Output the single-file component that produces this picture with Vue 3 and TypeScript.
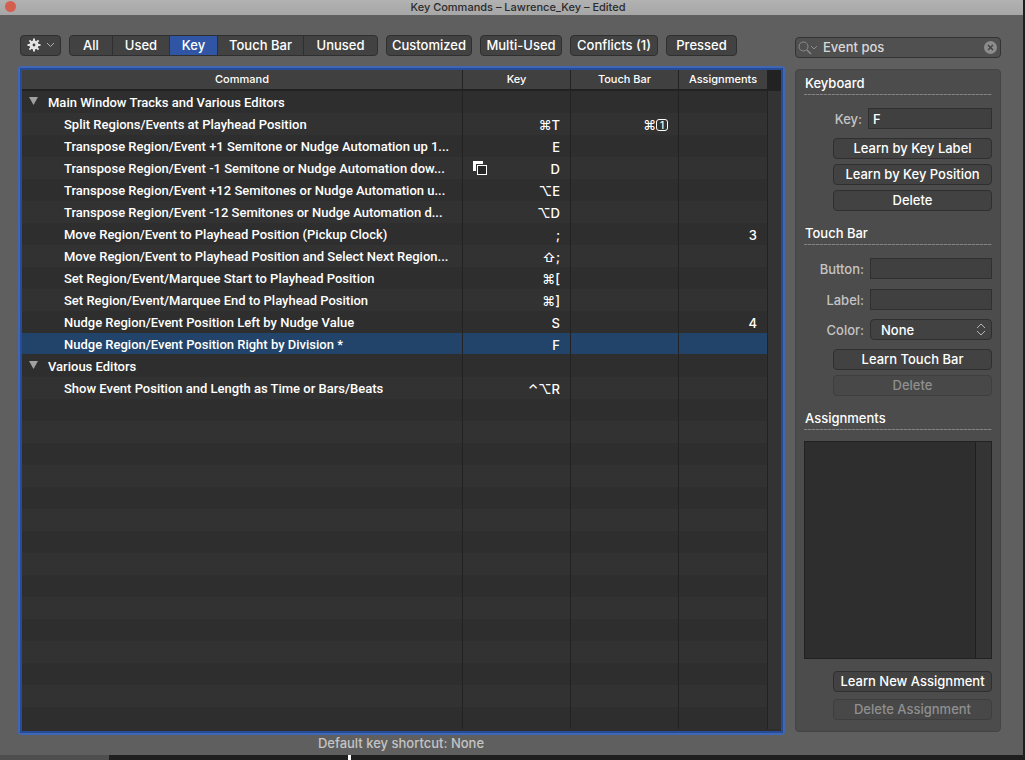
<script setup lang="ts">
import { ref } from 'vue'

interface Row {
  kind: 'group' | 'command' | 'empty'
  name?: string
  keys?: string
  touch?: string
  assign?: string
  conflict?: boolean
}

const filters = ['All', 'Used', 'Key', 'Touch Bar', 'Unused']
const activeFilter = ref('Key')
const searchText = ref('Event pos')
const keyValue = ref('F')
const touchButton = ref('')
const touchLabel = ref('')
const color = ref('None')
const selected = ref(11)

const commands: Row[] = [
  { kind: 'group', name: 'Main Window Tracks and Various Editors' },
  { kind: 'command', name: 'Split Regions/Events at Playhead Position', keys: '⌘T', touch: '1' },
  { kind: 'command', name: 'Transpose Region/Event +1 Semitone or Nudge Automation up 1...', keys: 'E' },
  { kind: 'command', name: 'Transpose Region/Event -1 Semitone or Nudge Automation dow...', keys: 'D', conflict: true },
  { kind: 'command', name: 'Transpose Region/Event +12 Semitones or Nudge Automation u...', keys: '⌥E' },
  { kind: 'command', name: 'Transpose Region/Event -12 Semitones or Nudge Automation d...', keys: '⌥D' },
  { kind: 'command', name: 'Move Region/Event to Playhead Position (Pickup Clock)', keys: ';', assign: '3' },
  { kind: 'command', name: 'Move Region/Event to Playhead Position and Select Next Region...', keys: '⇧;' },
  { kind: 'command', name: 'Set Region/Event/Marquee Start to Playhead Position', keys: '⌘[' },
  { kind: 'command', name: 'Set Region/Event/Marquee End to Playhead Position', keys: '⌘]' },
  { kind: 'command', name: 'Nudge Region/Event Position Left by Nudge Value', keys: 'S', assign: '4' },
  { kind: 'command', name: 'Nudge Region/Event Position Right by Division *', keys: 'F' },
  { kind: 'group', name: 'Various Editors' },
  { kind: 'command', name: 'Show Event Position and Length as Time or Bars/Beats', keys: '⌃⌥R' },
]
const rows: Row[] = [...commands, ...Array.from({ length: 15 }, (): Row => ({ kind: 'empty' }))]

function select(row: Row, index: number) {
  if (row.kind === 'command') selected.value = index
}
</script>

<template>
  <div class="desktop">
    <div class="window">
      <header class="titlebar">
        <button class="close" aria-label="Close window"></button>
        <h1>Key Commands – Lawrence_Key – Edited</h1>
      </header>

      <main class="content">
        <section class="main">
          <div class="toolbar">
            <button class="btn gear" aria-label="Actions">
              <svg width="14" height="14" viewBox="0 0 14 14">
                <g stroke="#e4e4e4" stroke-width="2">
                  <path d="M7 .5V13.5M.5 7H13.5M2.4 2.4L11.6 11.6M11.6 2.4L2.4 11.6" />
                </g>
                <circle cx="7" cy="7" r="4.6" fill="#e4e4e4" />
                <circle cx="7" cy="7" r="1.4" fill="#424242" />
              </svg>
              <svg width="9" height="6" viewBox="0 0 9 6">
                <path d="M1 1L4.5 4.5L8 1" fill="none" stroke="#b0b0b0" />
              </svg>
            </button>
            <div class="segments">
              <button v-for="f in filters" :key="f" :class="{ on: f === activeFilter }" @click="activeFilter = f">{{ f }}</button>
            </div>
            <button class="btn">Customized</button>
            <button class="btn">Multi-Used</button>
            <button class="btn">Conflicts (1)</button>
            <button class="btn">Pressed</button>
          </div>

          <div class="list">
            <table>
              <colgroup>
                <col />
                <col class="c-key" />
                <col class="c-key" />
                <col class="c-assign" />
              </colgroup>
              <thead>
                <tr>
                  <th>Command</th>
                  <th>Key</th>
                  <th>Touch Bar</th>
                  <th>Assignments</th>
                </tr>
              </thead>
              <tbody>
                <tr v-for="(row, i) in rows" :key="i" :class="[row.kind, { selected: i === selected }]" @click="select(row, i)">
                  <td>
                    <span class="cell">
                      <button v-if="row.kind === 'group'" class="disclose" :aria-label="'Collapse ' + row.name">
                        <svg width="9" height="8" viewBox="0 0 9 8"><path d="M0 0H9L4.5 8Z" fill="#a0a0a0" /></svg>
                      </button>
                      <span class="name">{{ row.name }}</span>
                    </span>
                  </td>
                  <td>
                    <span class="cell end">
                      <svg v-if="row.conflict" class="conflict" width="15" height="15" viewBox="0 0 15 15">
                        <path d="M0 0H10V3H3V10H0Z" fill="#fff" />
                        <rect x="4.5" y="4.5" width="9" height="9" fill="#262626" stroke="#fff" />
                      </svg>
                      <span>{{ row.keys }}</span>
                    </span>
                  </td>
                  <td>
                    <span v-if="row.touch" class="cell end">⌘<span class="touchkey">{{ row.touch }}</span></span>
                  </td>
                  <td><span class="cell end">{{ row.assign }}</span></td>
                </tr>
              </tbody>
            </table>
            <div class="scroller"></div>
          </div>
        </section>

        <aside class="side">
          <div class="search">
            <svg width="20" height="14" viewBox="0 0 20 14" fill="none" stroke="#8c8c8c">
              <circle cx="5.5" cy="5.5" r="4.5" />
              <path d="M9 9L13 13" stroke-width="1.4" />
              <path d="M13 5L16 8L19 5" />
            </svg>
            <input v-model="searchText" type="text" aria-label="Search commands" />
            <button class="clear" aria-label="Clear search" @click="searchText = ''">
              <svg width="13" height="13" viewBox="0 0 13 13">
                <circle cx="6.5" cy="6.5" r="6.5" fill="#8c8c8c" />
                <path d="M4 4L9 9M9 4L4 9" stroke="#444" stroke-width="1.5" />
              </svg>
            </button>
          </div>

          <div class="panel">
            <h2>Keyboard</h2>
            <div class="field wide">
              <label for="key">Key:</label>
              <input id="key" v-model="keyValue" type="text" />
            </div>
            <div class="stack">
              <button class="btn">Learn by Key Label</button>
              <button class="btn">Learn by Key Position</button>
              <button class="btn">Delete</button>
            </div>

            <h2>Touch Bar</h2>
            <div class="field">
              <label for="tb-button">Button:</label>
              <input id="tb-button" v-model="touchButton" type="text" />
            </div>
            <div class="field">
              <label for="tb-label">Label:</label>
              <input id="tb-label" v-model="touchLabel" type="text" />
            </div>
            <div class="field">
              <label for="tb-color">Color:</label>
              <span class="popup">
                <select id="tb-color" v-model="color">
                  <option>None</option>
                </select>
                <svg width="10" height="13" viewBox="0 0 10 13" fill="none" stroke="#b4b4b4">
                  <path d="M1 5L5 1L9 5M1 8L5 12L9 8" />
                </svg>
              </span>
            </div>
            <div class="stack">
              <button class="btn">Learn Touch Bar</button>
              <button class="btn" disabled>Delete</button>
            </div>

            <h2>Assignments</h2>
            <div class="assignments"><div class="well"></div></div>
            <div class="stack foot">
              <button class="btn">Learn New Assignment</button>
              <button class="btn" disabled>Delete Assignment</button>
            </div>
          </div>
        </aside>
      </main>

      <p class="status">Default key shortcut: None</p>
    </div>
    <div class="behind"><span class="behind-panel"></span><span class="playhead"></span></div>
  </div>
</template>

<style>
body {
  margin: 0;
  background: #1f1f1f;
}
</style>

<style scoped>
.desktop {
  box-sizing: border-box;
  display: flex;
  flex-direction: column;
  min-height: 100vh;
  padding-right: 2px;
  background: #1f1f1f;
  color: #fff;
  font-family: Inter, "Liberation Sans", "DejaVu Sans", sans-serif;
  font-size: 13px;
  font-weight: 500;
  line-height: 16px;
}
.desktop * {
  box-sizing: border-box;
}
button,
input,
select {
  margin: 0;
  padding: 0;
  border: 0;
  border-radius: 0;
  background: none;
  color: inherit;
  font: inherit;
  white-space: nowrap;
}
svg {
  display: block;
  flex: none;
}
.window {
  flex: 1;
  display: flex;
  flex-direction: column;
  background: #5f5f5f;
}
.titlebar {
  display: grid;
  grid-template-columns: 12px 1fr 0;
  align-items: center;
  height: 15px;
  padding-left: 5px;
  background: linear-gradient(#b2b2b2, #a6a6a6);
}
.close {
  width: 11px;
  height: 11px;
  margin-bottom: 2px;
  border-radius: 50%;
  background: #d35f50;
}
.titlebar h1 {
  margin: 0;
  padding-right: 4px;
  color: #2b2b2b;
  font-size: 11px;
  font-weight: 500;
  line-height: 15px;
  text-align: center;
}
.content {
  flex: 1;
  display: grid;
  grid-template-columns: minmax(0, 1fr) 206px;
  gap: 10px;
  padding: 20px 22px 0 18px;
}
.main,
.side {
  display: flex;
  flex-direction: column;
}
.toolbar {
  display: grid;
  grid-template-columns: 41px 309px 86px 82px 88px 71px;
  gap: 8px;
  height: 21px;
  margin: 0 2px 10px;
}
.btn {
  height: 21px;
  padding-bottom: 1px;
  border: 1px solid #2f2f2f;
  border-radius: 4px;
  background: #424242;
  text-align: center;
}
.btn:disabled {
  border-color: #3e3e3e;
  background: #484848;
  color: #8f8f8f;
}
.gear {
  display: flex;
  align-items: center;
  justify-content: center;
  gap: 5px;
}
.segments {
  display: grid;
  grid-template-columns: 42px 57px 48px 86px 1fr;
  overflow: hidden;
  border: 1px solid #2f2f2f;
  border-radius: 4px;
  background: #424242;
}
.segments button {
  padding-bottom: 1px;
}
.segments button + button {
  border-left: 1px solid #2f2f2f;
}
.segments .on {
  background: #2f55a4;
}
.list {
  flex: 1;
  display: grid;
  grid-template-columns: minmax(0, 1fr) 14px;
  border: 2px solid #3f67b3;
  border-radius: 3px;
  outline: 2px solid #274b96;
  outline-offset: -4px;
  padding: 1px 1px 4px 2px;
  background: #2e2e2e;
}
table {
  width: 100%;
  height: 22px;
  table-layout: fixed;
  border-collapse: separate;
  border-spacing: 0;
}
.c-key {
  width: 108px;
}
.c-assign {
  width: 89px;
}
th {
  height: 22px;
  padding: 0;
  border-bottom: 2px solid #212121;
  background: #404040;
  font-size: 11px;
  font-weight: 500;
  line-height: 20px;
}
th,
td {
  border-right: 1px solid #222;
}
td {
  height: 22px;
  padding: 0;
  background: #2e2e2e;
  vertical-align: top;
}
tr:nth-child(even) td {
  background: #323232;
}
tr.selected td {
  border-bottom: 1px solid #2e2e2e;
  background: #23446a;
}
.cell {
  display: flex;
  align-items: center;
  height: 21px;
  padding-top: 3px;
  white-space: nowrap;
}
.name {
  font-family: Roboto, "Liberation Sans", sans-serif;
}
.command .name {
  padding-left: 42px;
}
.disclose {
  width: 26px;
  padding: 0 8px 4px 7px;
}
.end {
  justify-content: flex-end;
  padding-right: 10px;
}
.conflict {
  margin: 0 auto 2px 10px;
}
.touchkey {
  width: 12px;
  height: 12px;
  border: 1px solid #fff;
  border-radius: 3px;
  font-size: 10px;
  line-height: 10px;
  text-align: center;
}
.scroller {
  border-top: 22px solid #222;
  background: #333;
}
.search {
  display: flex;
  align-items: center;
  height: 21px;
  margin-top: 2px;
  padding: 0 3px 0 2px;
  border: 1px solid #333;
  border-radius: 4px;
  background: #505050;
  color: #d8d8d8;
}
.search input {
  flex: 1;
  width: 0;
  padding: 0 0 2px 5px;
  outline: 0;
}
.panel {
  flex: 1;
  display: flex;
  flex-direction: column;
  margin: 11px 0 3px;
  padding: 5px 8px 11px;
  border: 1px solid #444;
  border-radius: 4px;
  background: #4c4c4c;
}
.panel h2 {
  margin: 0 0 13px;
  padding: 0 1px 4px;
  background: repeating-linear-gradient(90deg, #828282 0 3px, #606060 3px 4px) bottom / 100% 1px no-repeat;
  font-size: 13px;
  font-weight: 500;
  line-height: 16px;
}
.field {
  display: grid;
  grid-template-columns: 1fr 122px;
  align-items: center;
  gap: 6px;
  margin-bottom: 9px;
  color: #c4c4c4;
  text-align: right;
}
.field.wide {
  grid-template-columns: 1fr 124px;
}
h2 + .field + .field {
  margin-top: 1px;
}
.field input {
  width: 100%;
  height: 21px;
  padding: 0 4px;
  border: 1px solid #303030;
  outline: 0;
  background: #404040;
  color: #fff;
}
.popup {
  display: grid;
  grid-template-columns: 1fr 20px;
  align-items: center;
  height: 21px;
  border: 1px solid #2f2f2f;
  border-radius: 4px;
  background: #424242;
}
.popup select {
  grid-area: 1 / 1 / 2 / 3;
  width: 100%;
  height: 19px;
  padding-left: 10px;
  appearance: none;
  color: #fff;
  outline: 0;
}
.popup svg {
  grid-area: 1 / 2;
  justify-self: center;
  pointer-events: none;
}
.stack {
  display: grid;
  gap: 5px;
  margin: 0 0 14px 29px;
}
.assignments {
  flex: 1;
  display: flex;
  min-height: 60px;
  margin: -2px 0 12px;
  border: 1px solid #222;
  background: #343434;
}
.well {
  flex: 1;
  margin-right: 15px;
  border-right: 1px solid #1f1f1f;
  background: #2e2e2e;
}
.foot {
  gap: 7px;
  margin-bottom: 0;
}
.status {
  margin: 0;
  padding: 0 223px 4px 2px;
  color: #c4c4c4;
  text-align: center;
}
.behind {
  display: flex;
  height: 5px;
}
.behind-panel {
  width: 109px;
  margin-right: 239px;
  background: #4e4e4e;
}
.playhead {
  width: 3px;
  background: #fff;
}
</style>
